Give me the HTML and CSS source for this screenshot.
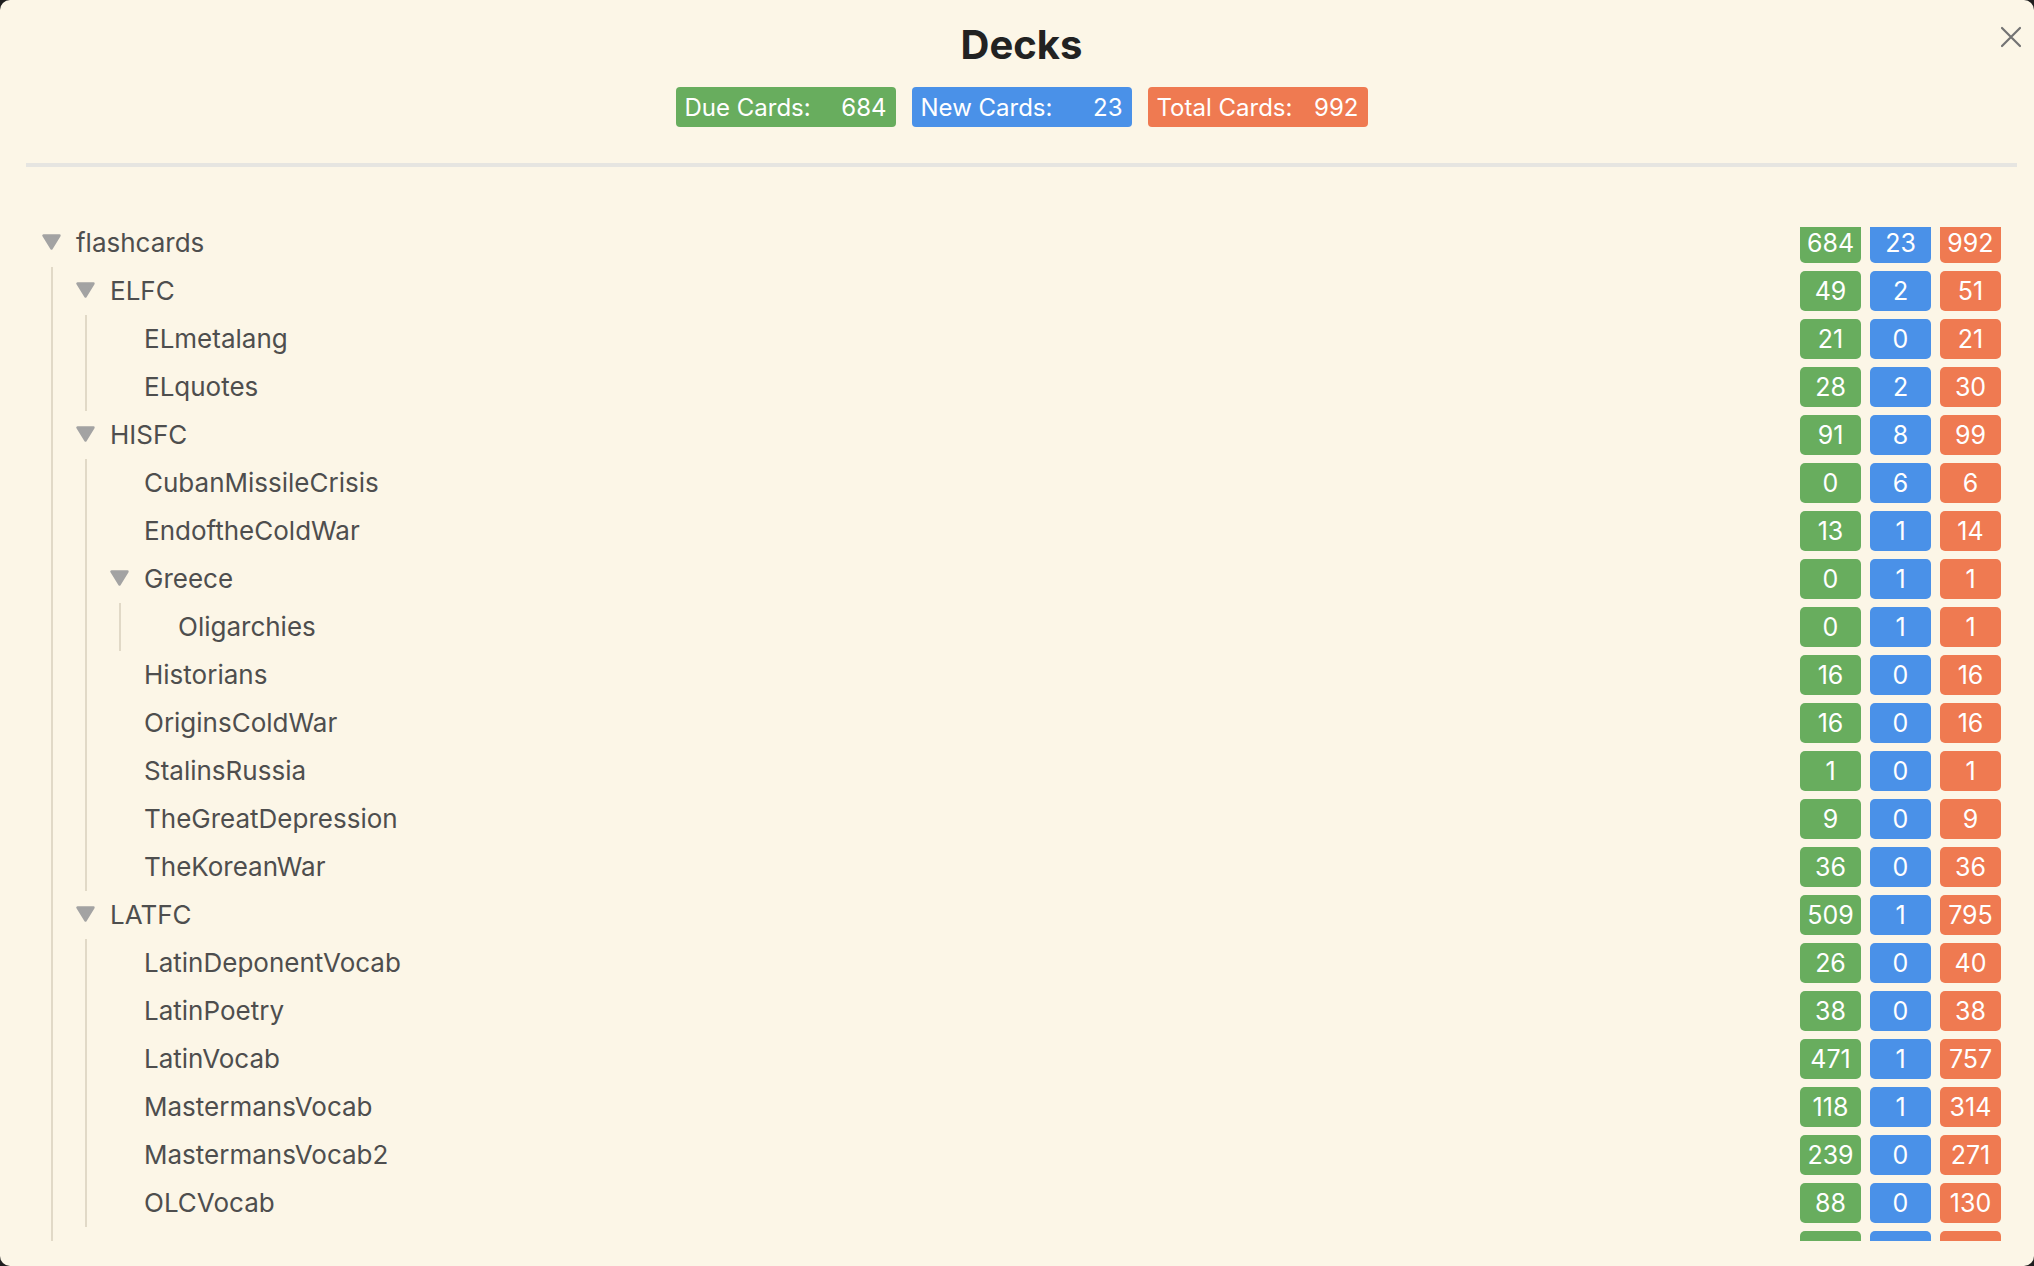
FILE: index.html
```html
<!DOCTYPE html>
<html lang="en">
<head>
  <meta charset="UTF-8" />
  <meta name="viewport" content="width=device-width, initial-scale=1" />
  <title>Decks</title>
  <link rel="stylesheet" href="styles.css">
</head>
<body>
  <div class="modal">
    <button class="close-btn" aria-label="Close">
      <svg width="22" height="22" viewBox="0 0 22 22"><path d="M2 2 L20 20 M20 2 L2 20" stroke="#737373" stroke-width="2.2" stroke-linecap="round" fill="none"/></svg>
    </button>

    <div class="header">
      <h1>Decks</h1>
      <div class="totals">
        <div class="total due"><span>Due Cards:</span><span>684</span></div>
        <div class="total new"><span>New Cards:</span><span>23</span></div>
        <div class="total all"><span>Total Cards:</span><span>992</span></div>
      </div>
    </div>
    <hr class="divider">

    <div class="tree-wrap">
      <ul class="tree" id="tree"></ul>
    </div>
  </div>

  <script>
    // deck name, due, new, total, children
    const decks = [
      ["flashcards", 684, 23, 992, [
        ["ELFC", 49, 2, 51, [
          ["ELmetalang", 21, 0, 21],
          ["ELquotes", 28, 2, 30]
        ]],
        ["HISFC", 91, 8, 99, [
          ["CubanMissileCrisis", 0, 6, 6],
          ["EndoftheColdWar", 13, 1, 14],
          ["Greece", 0, 1, 1, [
            ["Oligarchies", 0, 1, 1]
          ]],
          ["Historians", 16, 0, 16],
          ["OriginsColdWar", 16, 0, 16],
          ["StalinsRussia", 1, 0, 1],
          ["TheGreatDepression", 9, 0, 9],
          ["TheKoreanWar", 36, 0, 36]
        ]],
        ["LATFC", 509, 1, 795, [
          ["LatinDeponentVocab", 26, 0, 40],
          ["LatinPoetry", 38, 0, 38],
          ["LatinVocab", 471, 1, 757],
          ["MastermansVocab", 118, 1, 314],
          ["MastermansVocab2", 239, 0, 271],
          ["OLCVocab", 88, 0, 130]
        ]],
        ["LITFC", 35, 12, 47, []]
      ]]
    ];

    const arrow = '<svg width="19" height="16" viewBox="0 0 19 16"><polygon points="1.5,1.5 17.5,1.5 9.5,14.5" fill="#a3a3a3" stroke="#a3a3a3" stroke-width="2.4" stroke-linejoin="round"/></svg>';

    function buildList(items, ul) {
      items.forEach(function (d) {
        const li = document.createElement("li");
        const kids = d[4];
        li.innerHTML =
          '<div class="row">' +
            '<span class="toggle">' + (kids ? arrow : '') + '</span>' +
            '<span class="name">' + d[0] + '</span>' +
            '<span class="counts">' +
              '<span class="count due">' + d[1] + '</span>' +
              '<span class="count new">' + d[2] + '</span>' +
              '<span class="count all">' + d[3] + '</span>' +
            '</span>' +
          '</div>';
        if (kids && kids.length) {
          const sub = document.createElement("ul");
          sub.className = "children";
          buildList(kids, sub);
          li.appendChild(sub);
        }
        ul.appendChild(li);
      });
    }

    buildList(decks, document.getElementById("tree"));
  </script>
</body>
</html>
```

FILE: styles.css
```css
body {
  margin: 0;
  background: #1f1f1f;
  font-family: Inter, "Noto Sans", sans-serif;
  overflow: hidden;
}
.modal {
  position: relative;
  box-sizing: border-box;
  width: 2034px;
  height: 1266px;
  padding: 0 17px 0 26px;
  background: #fcf6e7;
  border-radius: 10px;
  overflow: hidden;
}
.close-btn {
  position: absolute;
  top: 26px;
  right: 12px;
  width: 22px;
  height: 22px;
  padding: 0;
  border: none;
  background: none;
  cursor: pointer;
}
.close-btn svg {
  display: block;
}
.header {
  padding-top: 21px;
  text-align: center;
}
h1 {
  margin: 0;
  font-size: 40px;
  line-height: 48px;
  font-weight: 700;
  color: #222;
}
.totals {
  display: flex;
  justify-content: center;
  gap: 16px;
  margin-top: 18px;
}
.total {
  display: flex;
  justify-content: space-between;
  align-items: center;
  box-sizing: border-box;
  width: 220px;
  height: 40px;
  padding: 0 9px;
  border-radius: 4px;
  color: #fff;
  font-size: 24px;
}
.due { background: #68ad5e; }
.new { background: #4a91e8; }
.all { background: #ef7a51; }

.divider {
  margin: 36px 0 0;
  height: 4px;
  border: none;
  background: #e6e5e1;
}

.tree-wrap {
  margin-top: 60px;
  height: 1014px;
  overflow: hidden;
  padding: 0 16px;
}
.tree,
.children {
  list-style: none;
  margin: 0;
  padding: 0;
}
.tree {
  margin-top: -8px;
}
.children {
  margin-left: 9px;
  padding-left: 23px;
  border-left: 2px solid #e1d9c7;
}
.row {
  display: flex;
  align-items: center;
  height: 48px;
}
.toggle {
  width: 19px;
  height: 16px;
  margin-right: 15px;
  margin-bottom: 3px;
  flex-shrink: 0;
}
.toggle svg {
  display: block;
}
.name {
  margin-bottom: 2px;
  font-size: 26px;
  color: #4e4e4e;
}
.counts {
  display: flex;
  gap: 9px;
  margin-left: auto;
}
.count {
  width: 61px;
  height: 40px;
  line-height: 40px;
  border-radius: 5px;
  text-align: center;
  color: #fff;
  font-size: 25px;
}
```
